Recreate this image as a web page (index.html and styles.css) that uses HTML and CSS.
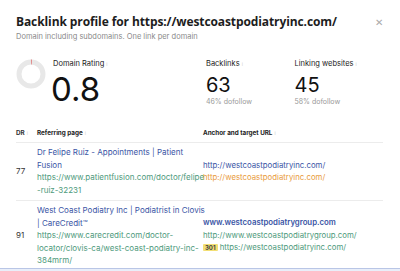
FILE: index.html
```html
<!DOCTYPE html>
<html>
<head>
<meta charset="utf-8">
<link rel="stylesheet" href="styles.css">
</head>
<body>
<div class="modal">
  <div class="head">
    <div>
      <h1 class="title">Backlink profile for https://westcoastpodiatryinc.com/</h1>
      <div class="subtitle">Domain including subdomains. One link per domain</div>
    </div>
    <div class="close">&#x2715;</div>
  </div>
  <div class="stats">
    <div class="dr">
      <svg class="donut" width="30" height="30" viewBox="0 0 30 30">
        <circle cx="15" cy="15" r="12" fill="none" stroke="#e8e8e8" stroke-width="5"/>
        <path d="M15 3 A12 12 0 0 1 15.8 3" fill="none" stroke="#e07a7a" stroke-width="5"/>
      </svg>
      <div>
        <div class="label">Domain Rating<span class="i">i</span></div>
        <div class="big">0.8</div>
      </div>
    </div>
    <div class="stat">
      <div class="label">Backlinks<span class="i">i</span></div>
      <div class="num">63</div>
      <div class="sub">46% dofollow</div>
    </div>
    <div class="stat">
      <div class="label">Linking websites<span class="i">i</span></div>
      <div class="num">45</div>
      <div class="sub">58% dofollow</div>
    </div>
  </div>
  <div class="table">
    <div class="row th">
      <div class="c1">DR<span class="i">i</span></div>
      <div class="c2">Referring page<span class="i">i</span></div>
      <div class="c3">Anchor and target URL<span class="i">i</span></div>
    </div>
    <div class="row">
      <div class="c1">77</div>
      <div class="c2">
        <div class="ptitle">Dr Felipe Ruiz - Appointments | Patient<br>Fusion</div>
        <div class="purl">https://www.patientfusion.com/doctor/felipe<br>-ruiz-32231</div>
      </div>
      <div class="c3">
        <div class="anchor">http://westcoastpodiatryinc.com/</div>
        <div class="target">http://westcoastpodiatryinc.com/</div>
      </div>
    </div>
    <div class="row">
      <div class="c1">91</div>
      <div class="c2">
        <div class="ptitle">West Coast Podiatry Inc | Podiatrist in Clovis<br>| CareCredit™</div>
        <div class="purl">https://www.carecredit.com/doctor-<br>locator/clovis-ca/west-coast-podiatry-inc-<br>384mrm/</div>
      </div>
      <div class="c3">
        <div class="anchor strong">www.westcoastpodiatrygroup.com</div>
        <div class="turl">http://www.westcoastpodiatrygroup.com/</div>
        <div class="turl"><span class="badge">301</span> https://westcoastpodiatryinc.com/</div>
      </div>
    </div>
  </div>
</div>
<div class="bottom"></div>
</body>
</html>
```
FILE: styles.css
```css
html, body { margin: 0; padding: 0; background: #fff; }
body { font-family: Inter, "Open Sans", sans-serif; color: #222; width: 400px; height: 271px; overflow: hidden; position: relative; }
.modal { padding: 13px 17px 0 16px; }
.head { display: flex; justify-content: space-between; align-items: flex-start; }
.title { margin: 0; font-family: "Open Sans", sans-serif; font-size: 12px; font-weight: 700; letter-spacing: -0.1px; line-height: 18px; color: #1d1d1d; white-space: nowrap; }
.subtitle { font-size: 7.5px; color: #8a8a8a; margin-top: 1px; line-height: 10px; }
.close { color: #aaa; font-size: 10px; margin-top: 3px; }
.stats { display: flex; margin-top: 17px; height: 66px; }
.dr { display: flex; width: 191px; }
.donut { margin: 0 7px 0 0; }
.label { font-size: 7.5px; line-height: 10px; color: #222; }
.i { color: #ccc; font-size: 5px; vertical-align: top; margin-left: 2px; }
.big { font-size: 33px; line-height: 34px; color: #111; margin-left: -2px; margin-top: 3px; }
.stat { width: 89px; }
.num { font-size: 20px; line-height: 22px; margin-top: 5px; color: #111; }
.sub { font-size: 7px; color: #999; margin-top: 1px; }
.table { width: 367px; }
.row { display: flex; border-bottom: 1px solid #ececec; align-items: center; }
.th { font-size: 6.3px; font-weight: 700; height: 17px; line-height: 17px; }
.th .i { font-weight: 400; }
.row:not(.th) { padding: 3px 0 4px; font-size: 8px; line-height: 12.5px; }
.c1 { width: 21px; color: #333; }
.c2 { width: 166px; white-space: nowrap; }
.c3 { flex: 1; white-space: nowrap; }
.row:not(.th) .c3 { font-size: 7.8px; }
.ptitle { color: #3a55a5; }
.purl { color: #4e9a7c; }
.turl { color: #4e9a7c; }
.anchor { color: #3a55a5; }
.anchor.strong { font-weight: 600; }
.target { color: #e99b3d; }
.badge { background: #f3df74; color: #444; font-size: 6px; font-weight: 700; padding: 0 2px; border-radius: 1px; }
.bottom { position: absolute; left: 0; right: 0; top: 268px; height: 4px; background: #e9eef9; border-top: 1px solid #b9c6e6; }
```
